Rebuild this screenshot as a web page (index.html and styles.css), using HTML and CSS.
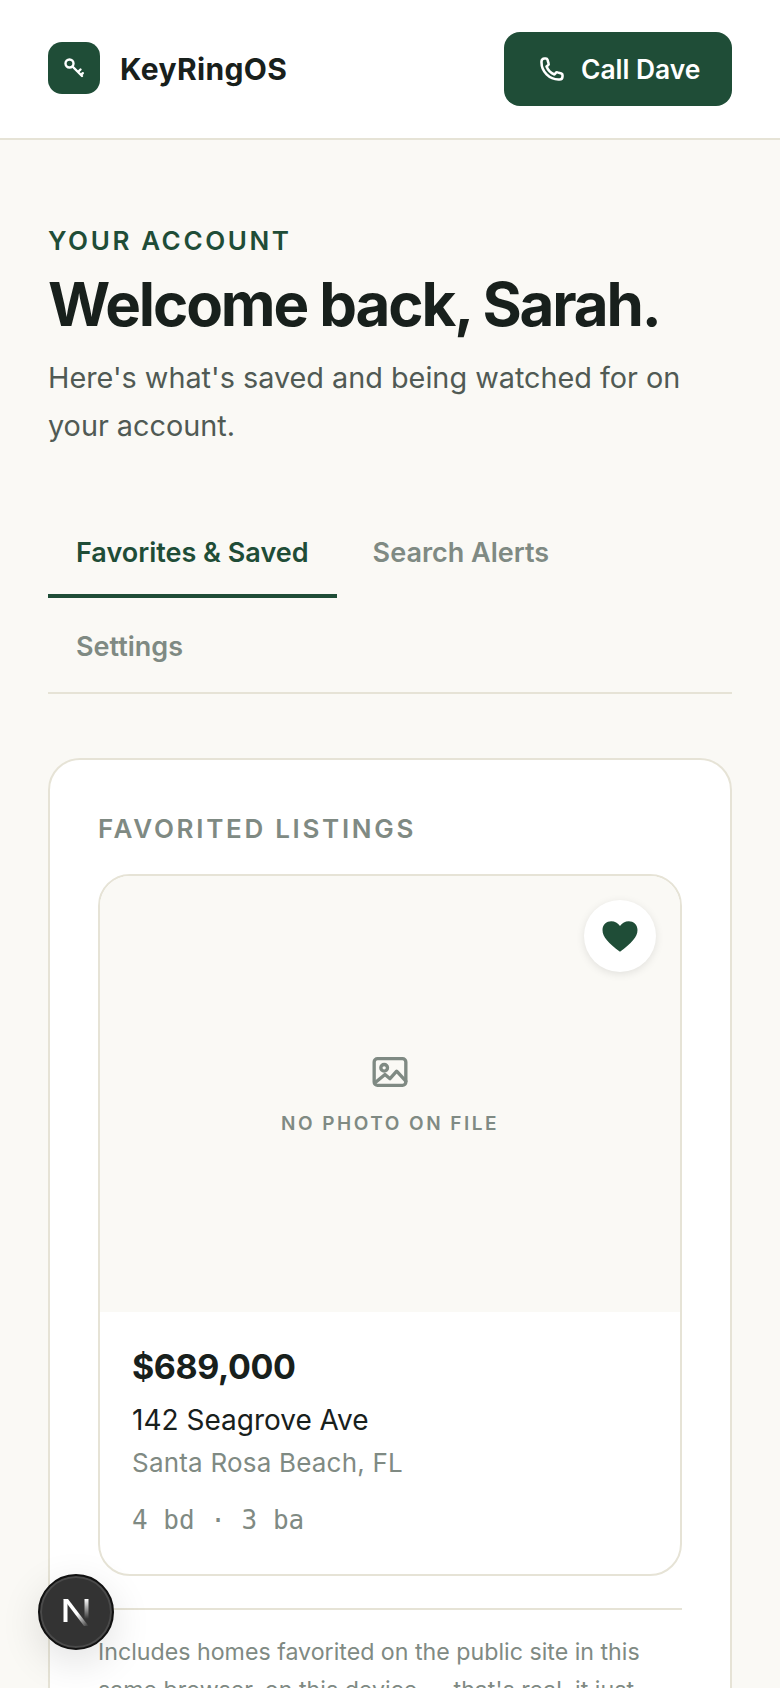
FILE: index.html
```html
<!DOCTYPE html>
<html lang="en">

<head>
    <title>KeyRingOS - Your Account</title>
    <link rel="stylesheet" href="styles.css">
</head>

<body>
    <header class="topbar">
        <div class="brand">
            <div class="brandIcon">
                <svg width="24" height="24" viewBox="0 0 24 24" fill="none" stroke="#fff" stroke-width="2.4" stroke-linecap="round" stroke-linejoin="round">
                    <circle cx="7.5" cy="7.5" r="4"></circle>
                    <path d="M10.5 10.5L20 20M16 16l2.5-2.5M19 19l1.8-1.8"></path>
                </svg>
            </div>
            <span class="brandName">KeyRingOS</span>
        </div>
        <button type="button" class="callBtn">
            <svg width="28" height="28" viewBox="0 0 24 24" fill="none" stroke="#fff" stroke-width="2.2" stroke-linecap="round" stroke-linejoin="round">
                <path d="M3 5.500C3 4 4 3 5.500 3h1.300c.6 0 1.100.4 1.300 1l1 3.300c.2.500 0 1.100-.4 1.400L7.300 9.900c1.200 3 3.800 5.600 6.800 6.800l1.200-1.400c.3-.4.900-.6 1.400-.4l3.300 1c.6.200 1 .7 1 1.300v1.300c0 1.500-1 2.500-2.500 2.500h-1C9.800 21 3 14.200 3 6.500z"></path>
            </svg>
            Call Dave
        </button>
    </header>

    <main class="content">
        <p class="eyebrow">YOUR ACCOUNT</p>
        <h1 class="welcome">Welcome back, Sarah.</h1>
        <p class="intro">Here's what's saved and being watched for on your account.</p>

        <nav class="tabs">
            <a class="tab active">Favorites &amp; Saved</a>
            <a class="tab">Search Alerts</a>
            <a class="tab">Settings</a>
        </nav>

        <section class="panel">
            <h2 class="panelTitle">FAVORITED LISTINGS</h2>
            <article class="listing">
                <div class="photo">
                    <div class="heartBtn">
                        <svg width="42" height="42" viewBox="0 0 24 24" fill="#1f4d37">
                            <path d="M12 21C5.500 16 2 12.600 2 8.500 2 5.400 4.400 3.500 7 3.500c2 0 3.800 1 5 2.800 1.200-1.800 3-2.800 5-2.800 2.600 0 5 1.900 5 5 0 4.100-3.500 7.500-10 12.500z"></path>
                        </svg>
                    </div>
                    <svg width="40" height="40" viewBox="0 0 24 24" fill="none" stroke="#7f8a83" stroke-width="2" stroke-linecap="round" stroke-linejoin="round">
                        <rect x="2.500" y="4" width="19" height="16" rx="2"></rect>
                        <circle cx="8.500" cy="9.500" r="2"></circle>
                        <path d="M3 18.500l6-5 3 2.500 4-4.500 5.500 6"></path>
                    </svg>
                    <span class="noPhoto">NO PHOTO ON FILE</span>
                </div>
                <div class="details">
                    <div class="price">$689,000</div>
                    <div class="street">142 Seagrove Ave</div>
                    <div class="city">Santa Rosa Beach, FL</div>
                    <div class="specs">4 bd · 3 ba</div>
                </div>
            </article>
            <p class="note">Includes homes favorited on the public site in this same browser, on this device — that's real, it just doesn't follow you to other devices yet.</p>
        </section>
    </main>

    <div class="devBadge">
        <svg width="30" height="30" viewBox="0 0 30 30" fill="none">
            <defs>
                <linearGradient id="diagFade" x1="0" y1="0" x2="1" y2="1">
                    <stop offset="0.55" stop-color="#fff"></stop>
                    <stop offset="1" stop-color="#fff" stop-opacity="0"></stop>
                </linearGradient>
                <linearGradient id="barFade" x1="0" y1="0" x2="0" y2="1">
                    <stop offset="0" stop-color="#fff"></stop>
                    <stop offset="1" stop-color="#fff" stop-opacity="0"></stop>
                </linearGradient>
            </defs>
            <rect x="2.500" y="2" width="4" height="23" fill="#fff"></rect>
            <path d="M2.500 2h4.500L27.500 29H23z" fill="url(#diagFade)"></path>
            <rect x="23.500" y="2" width="4" height="20" fill="url(#barFade)"></rect>
        </svg>
    </div>
</body>

</html>
```

FILE: styles.css
```css
html,
body {
    height: 1688px;
    overflow: hidden;
}

body {
    margin: 0;
    background-color: #faf9f5;
    font-family: Inter, 'Liberation Sans', sans-serif;
    color: #18201c;
}

.topbar {
    display: flex;
    justify-content: space-between;
    align-items: center;
    height: 138px;
    padding: 0 48px;
    background-color: #fff;
    border-bottom: 2px solid #e6e3d6;
}

.brand {
    display: flex;
    align-items: center;
    gap: 20px;
}

.brandIcon {
    display: flex;
    justify-content: center;
    align-items: center;
    width: 52px;
    height: 52px;
    margin-bottom: 2px;
    border-radius: 14px;
    background-color: #1f4d37;
}

.brandName {
    font-size: 30px;
    font-weight: 700;
    letter-spacing: 0.35px;
}

.callBtn {
    display: flex;
    align-items: center;
    gap: 15px;
    width: 228px;
    height: 74px;
    padding: 0 0 0 34px;
    border: none;
    border-radius: 16px;
    background-color: #1f4d37;
    color: #fff;
    font-family: inherit;
    font-size: 26.4px;
    font-weight: 600;
    white-space: nowrap;
}

.content {
    padding: 0 48px;
}

.eyebrow {
    margin: 85px 0 0;
    font-size: 26px;
    line-height: 32px;
    font-weight: 600;
    letter-spacing: 2.6px;
    color: #1f4d37;
}

.welcome {
    margin: 11px 0 0;
    font-size: 60px;
    line-height: 72px;
    font-weight: 700;
    letter-spacing: -2.1px;
}

.intro {
    margin: 14px 0 0;
    font-size: 28.8px;
    line-height: 48px;
    color: #505a54;
}

.tabs {
    display: flex;
    flex-wrap: wrap;
    column-gap: 8px;
    margin-top: 54px;
    border-bottom: 2px solid #e6e3d6;
}

.tab {
    padding: 31px 28px 23px;
    font-size: 27px;
    line-height: 36px;
    font-weight: 600;
    color: #7f8a83;
    border-bottom: 4px solid transparent;
}

.tab.active {
    color: #1f4d37;
    border-bottom-color: #1f4d37;
}

.panel {
    margin-top: 64px;
    padding: 48px;
    background-color: #fff;
    border: 2px solid #e6e3d6;
    border-radius: 32px;
}

.panelTitle {
    margin: 0 0 24px;
    font-size: 26px;
    line-height: 42px;
    font-weight: 600;
    letter-spacing: 2.7px;
    color: #7f8a83;
}

.listing {
    border: 2px solid #e6e3d6;
    border-radius: 32px;
    overflow: hidden;
}

.photo {
    position: relative;
    display: flex;
    flex-direction: column;
    justify-content: center;
    align-items: center;
    gap: 19px;
    height: 436px;
    background-color: #faf9f5;
}

.heartBtn {
    position: absolute;
    top: 24px;
    right: 24px;
    display: flex;
    justify-content: center;
    align-items: center;
    width: 72px;
    height: 72px;
    border-radius: 50%;
    background-color: #fff;
    box-shadow: 0 2px 8px rgba(0, 0, 0, 0.1);
}

.noPhoto {
    font-size: 19px;
    line-height: 26px;
    font-weight: 600;
    letter-spacing: 2.5px;
    color: #7f8a83;
}

.details {
    padding: 33px 32px 34px;
}

.price {
    font-size: 34px;
    line-height: 44px;
    font-weight: 700;
    letter-spacing: -0.4px;
}

.street {
    margin-top: 11px;
    font-size: 28px;
    line-height: 40px;
}

.city {
    margin-top: 3px;
    font-size: 26px;
    line-height: 40px;
    letter-spacing: 0.2px;
    color: #7f8a83;
}

.specs {
    margin-top: 17px;
    font-family: 'DejaVu Sans Mono', 'Liberation Mono', monospace;
    font-size: 26px;
    line-height: 40px;
    color: #7f8a83;
}

.note {
    margin: 32px 0 0;
    padding-top: 23px;
    border-top: 2px solid #e6e3d6;
    font-size: 23.2px;
    line-height: 38px;
    color: #7f8a83;
}

.devBadge {
    position: fixed;
    left: 38px;
    top: 1574px;
    display: flex;
    justify-content: center;
    align-items: center;
    width: 72px;
    height: 72px;
    border-radius: 50%;
    background-color: #333;
    border: 2px solid #111;
    box-shadow: inset 0 0 0 2px #4a4a4a, 0 12px 40px rgba(0, 0, 0, 0.12);
}
```
